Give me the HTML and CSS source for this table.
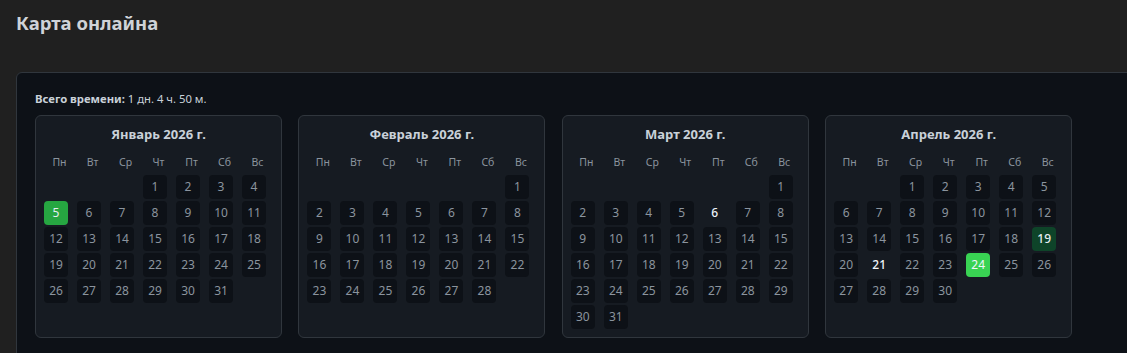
FILE: index.html
```html
<!DOCTYPE html>
<html lang="ru">
<head>
<meta charset="utf-8">
<title>Карта онлайна</title>
<link rel="stylesheet" href="styles.css">
</head>
<body>
<header class="page-head">
  <h1 class="page-title">Карта онлайна</h1>
</header>
<section class="panel">
  <p class="total"><b>Всего времени:</b> 1 дн. 4 ч. 50 м.</p>
  <div class="months">
    <div class="month">
      <div class="month-title">Январь 2026 г.</div>
      <div class="weekdays"><span>Пн</span><span>Вт</span><span>Ср</span><span>Чт</span><span>Пт</span><span>Сб</span><span>Вс</span></div>
      <div class="days">
        <span class="day empty"></span><span class="day empty"></span><span class="day empty"></span>
        <span class="day">1</span><span class="day">2</span><span class="day">3</span><span class="day">4</span>
        <span class="day lvl3">5</span><span class="day">6</span><span class="day">7</span><span class="day">8</span><span class="day">9</span><span class="day">10</span><span class="day">11</span>
        <span class="day">12</span><span class="day">13</span><span class="day">14</span><span class="day">15</span><span class="day">16</span><span class="day">17</span><span class="day">18</span>
        <span class="day">19</span><span class="day">20</span><span class="day">21</span><span class="day">22</span><span class="day">23</span><span class="day">24</span><span class="day">25</span>
        <span class="day">26</span><span class="day">27</span><span class="day">28</span><span class="day">29</span><span class="day">30</span><span class="day">31</span>
      </div>
    </div>
    <div class="month">
      <div class="month-title">Февраль 2026 г.</div>
      <div class="weekdays"><span>Пн</span><span>Вт</span><span>Ср</span><span>Чт</span><span>Пт</span><span>Сб</span><span>Вс</span></div>
      <div class="days">
        <span class="day empty"></span><span class="day empty"></span><span class="day empty"></span><span class="day empty"></span><span class="day empty"></span><span class="day empty"></span>
        <span class="day">1</span>
        <span class="day">2</span><span class="day">3</span><span class="day">4</span><span class="day">5</span><span class="day">6</span><span class="day">7</span><span class="day">8</span>
        <span class="day">9</span><span class="day">10</span><span class="day">11</span><span class="day">12</span><span class="day">13</span><span class="day">14</span><span class="day">15</span>
        <span class="day">16</span><span class="day">17</span><span class="day">18</span><span class="day">19</span><span class="day">20</span><span class="day">21</span><span class="day">22</span>
        <span class="day">23</span><span class="day">24</span><span class="day">25</span><span class="day">26</span><span class="day">27</span><span class="day">28</span>
      </div>
    </div>
    <div class="month">
      <div class="month-title">Март 2026 г.</div>
      <div class="weekdays"><span>Пн</span><span>Вт</span><span>Ср</span><span>Чт</span><span>Пт</span><span>Сб</span><span>Вс</span></div>
      <div class="days">
        <span class="day empty"></span><span class="day empty"></span><span class="day empty"></span><span class="day empty"></span><span class="day empty"></span><span class="day empty"></span>
        <span class="day">1</span>
        <span class="day">2</span><span class="day">3</span><span class="day">4</span><span class="day">5</span><span class="day mark">6</span><span class="day">7</span><span class="day">8</span>
        <span class="day">9</span><span class="day">10</span><span class="day">11</span><span class="day">12</span><span class="day">13</span><span class="day">14</span><span class="day">15</span>
        <span class="day">16</span><span class="day">17</span><span class="day">18</span><span class="day">19</span><span class="day">20</span><span class="day">21</span><span class="day">22</span>
        <span class="day">23</span><span class="day">24</span><span class="day">25</span><span class="day">26</span><span class="day">27</span><span class="day">28</span><span class="day">29</span>
        <span class="day">30</span><span class="day">31</span>
      </div>
    </div>
    <div class="month">
      <div class="month-title">Апрель 2026 г.</div>
      <div class="weekdays"><span>Пн</span><span>Вт</span><span>Ср</span><span>Чт</span><span>Пт</span><span>Сб</span><span>Вс</span></div>
      <div class="days">
        <span class="day empty"></span><span class="day empty"></span>
        <span class="day">1</span><span class="day">2</span><span class="day">3</span><span class="day">4</span><span class="day">5</span>
        <span class="day">6</span><span class="day">7</span><span class="day">8</span><span class="day">9</span><span class="day">10</span><span class="day">11</span><span class="day">12</span>
        <span class="day">13</span><span class="day">14</span><span class="day">15</span><span class="day">16</span><span class="day">17</span><span class="day">18</span><span class="day lvl1">19</span>
        <span class="day">20</span><span class="day mark">21</span><span class="day">22</span><span class="day">23</span><span class="day lvl4">24</span><span class="day">25</span><span class="day">26</span>
        <span class="day">27</span><span class="day">28</span><span class="day">29</span><span class="day">30</span>
      </div>
    </div>
  </div>
</section>
</body>
</html>
```
FILE: styles.css
```css
* { box-sizing: border-box; }

html, body {
  margin: 0;
  padding: 0;
  overflow: hidden;
}

body {
  background: #202020;
  font-family: "Noto Sans", "Open Sans", "DejaVu Sans", sans-serif;
  color: #c9d1d9;
}

.page-head {
  height: 72px;
  padding: 10px 16px 0;
}

.page-title {
  margin: 0;
  font-size: 18.5px;
  line-height: 26px;
  font-weight: 700;
  color: #cfd3d8;
}

.panel {
  margin: 0 -20px 0 16px;
  background: #0d1117;
  border: 1px solid #30363d;
  border-radius: 6px;
  padding: 18px 18px 20px;
  min-height: 290px;
}

.total {
  margin: 0;
  font-size: 11.3px;
  line-height: 16px;
  color: #c9d1d9;
}

.total b {
  font-weight: 700;
}

.months {
  display: flex;
  gap: 16.4px;
  margin-top: 8px;
  align-items: stretch;
}

.month {
  width: 247px;
  background: #161b22;
  border: 1px solid #30363d;
  border-radius: 6px;
  padding: 8px;
}

.month-title {
  text-align: center;
  font-size: 13px;
  line-height: 20px;
  font-weight: 700;
  color: #c9d1d9;
}

.weekdays {
  display: grid;
  grid-template-columns: repeat(7, 31px);
  column-gap: 2px;
  margin-top: 10px;
  font-size: 10.5px;
  line-height: 16px;
  color: #8b949e;
  text-align: center;
}

.days {
  display: grid;
  grid-template-columns: repeat(7, 31px);
  column-gap: 2px;
  row-gap: 2px;
  margin-top: 5px;
}

.day {
  width: 24px;
  height: 24px;
  border-radius: 4px;
  background: #0d1117;
  color: #8b949e;
  font-size: 12px;
  line-height: 24px;
  text-align: center;
}

.day.empty { background: transparent; }

.day.mark {
  background: transparent;
  color: #f0f6fc;
  font-weight: 500;
}

.day.lvl1 { background: #0e4429; color: #e6edf3; font-weight: 500; }
.day.lvl3 { background: #26a641; color: #e6edf3; }
.day.lvl4 { background: #39d353; color: #f0f6fc; }
```
